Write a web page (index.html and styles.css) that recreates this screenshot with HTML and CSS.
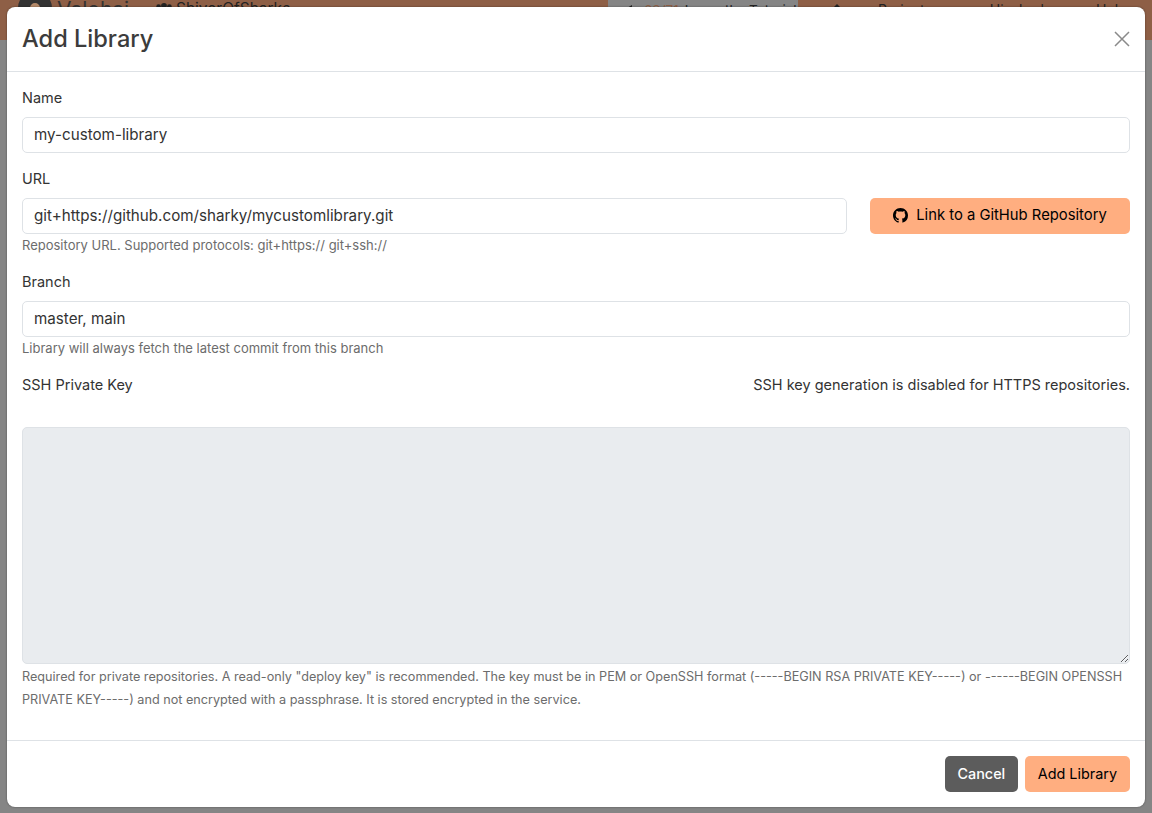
FILE: index.html
```html
<!DOCTYPE html>
<html lang="en">
<head>
<meta charset="utf-8">
<title>Add Library</title>
<link rel="stylesheet" href="styles.css">
</head>
<body>
<header class="topbar">
  <span class="brand-logo"></span>
  <span class="brand-name">Valohai</span>
  <span class="org">
    <svg class="org-icon" viewBox="0 0 20 14" width="18" height="13"><circle cx="4" cy="5" r="2.6"/><circle cx="10" cy="4" r="3.2"/><circle cx="16" cy="5" r="2.6"/><path d="M0 13c0-3 2-5 4-5s4 2 4 5zM5 13c0-4 2-6 5-6s5 2 5 6zM12 13c0-3 2-5 4-5s4 2 4 5z"/></svg>
    ShiverOfSharks
  </span>
  <div class="top-right">
    <div class="announce">
      <svg class="a-icon" viewBox="0 0 10 10" width="10" height="10"><path d="M10 0v10L0 6z"/></svg>
      <span class="a-count">63/71</span>
      <span>Learn the Tutorial</span>
    </div>
    <svg class="nav-icon" viewBox="0 0 10 10" width="10" height="10"><path d="M5 0l5 5v5H0V5z"/></svg>
    <span class="nav-link">Projects</span>
    <span class="nav-link">Hi, sharky</span>
    <span class="nav-link">Help</span>
  </div>
</header>
<div class="modal" role="dialog" aria-label="Add Library">
  <div class="modal-header">
    <h1 class="modal-title">Add Library</h1>
    <button class="close" aria-label="Close">
      <svg viewBox="0 0 16 16" width="16" height="16"><path d="M1 1l14 14M15 1L1 15" fill="none" stroke="#8a8a8a" stroke-width="1.5"/></svg>
    </button>
  </div>
  <div class="modal-body">
    <div class="field">
      <label class="label">Name</label>
      <input class="input" type="text" value="my-custom-library">
    </div>
    <div class="field">
      <label class="label">URL</label>
      <div class="url-row">
        <div class="url-col">
          <input class="input" type="text" value="git+https://github.com/sharky/mycustomlibrary.git">
          <div class="help">Repository URL. Supported protocols: git+https:// git+ssh://</div>
        </div>
        <button class="btn btn-primary btn-github">
          <svg viewBox="0 0 16 16" width="15" height="15"><path fill="#000" d="M8 0C3.58 0 0 3.58 0 8c0 3.54 2.29 6.53 5.47 7.59.4.07.55-.17.55-.38 0-.19-.01-.82-.01-1.49-2.01.37-2.53-.49-2.69-.94-.09-.23-.48-.94-.82-1.13-.28-.15-.68-.52-.01-.53.63-.01 1.08.58 1.23.82.72 1.21 1.87.87 2.33.66.07-.52.28-.87.51-1.07-1.78-.2-3.64-.89-3.64-3.95 0-.87.31-1.59.82-2.15-.08-.2-.36-1.02.08-2.12 0 0 .67-.21 2.2.82.64-.18 1.32-.27 2-.27s1.36.09 2 .27c1.53-1.04 2.2-.82 2.2-.82.44 1.1.16 1.92.08 2.12.51.56.82 1.27.82 2.15 0 3.07-1.87 3.75-3.65 3.95.29.25.54.73.54 1.48 0 1.07-.01 1.93-.01 2.2 0 .21.15.46.55.38A8.01 8.01 0 0 0 16 8c0-4.42-3.58-8-8-8z"/></svg>
          Link to a GitHub Repository
        </button>
      </div>
    </div>
    <div class="field">
      <label class="label">Branch</label>
      <input class="input" type="text" value="master, main">
      <div class="help">Library will always fetch the latest commit from this branch</div>
    </div>
    <div class="key-head">
      <label class="label">SSH Private Key</label>
      <span class="key-note">SSH key generation is disabled for HTTPS repositories.</span>
    </div>
    <textarea class="textarea" disabled></textarea>
    <div class="help help-long">Required for private repositories. A read-only "deploy key" is recommended. The key must be in PEM or OpenSSH format (-----BEGIN RSA PRIVATE KEY-----) or ------BEGIN OPENSSH PRIVATE KEY-----) and not encrypted with a passphrase. It is stored encrypted in the service.</div>
  </div>
  <div class="modal-footer">
    <button class="btn btn-secondary">Cancel</button>
    <button class="btn btn-primary">Add Library</button>
  </div>
</div>
</body>
</html>
```
FILE: styles.css
```css
* { box-sizing: border-box; }
html, body { margin: 0; height: 100%; }
body {
  width: 1152px;
  height: 813px;
  overflow: hidden;
  background: #858585;
  font-family: Inter, "Noto Sans", sans-serif;
  color: #333;
  position: relative;
}
.topbar {
  height: 40px;
  background: #8e5f46;
  display: flex;
  align-items: flex-start;
  padding-left: 18px;
  color: #222;
  overflow: hidden;
}
.brand-logo {
  flex: none;
  width: 34px;
  height: 34px;
  margin-top: -9px;
  border-radius: 50%;
  border: 12px solid #333;
  background: #b58a6a;
}
.brand-name { margin-left: 5px; width: 98px; font-size: 21px; line-height: 20px; color: #333; }
.org { display: flex; gap: 3px; font-size: 15.5px; line-height: 17px; white-space: nowrap; }
.org-icon { fill: #222; margin-top: 2px; }
.top-right { display: flex; align-items: flex-start; margin-left: auto; width: 544px; font-size: 14px; line-height: 20px; white-space: nowrap; }
.announce { flex: none; display: flex; gap: 6px; width: 190px; height: 40px; background: #858585; padding-left: 14px; font-size: 13.5px; }
.a-icon { margin-top: 5px; margin-right: 6px; fill: #222; }
.a-count { color: #8e5f46; }
.nav-icon { flex: none; margin: 4px 36px 0 34px; fill: #222; }
.nav-link { margin-right: 58px; }
.nav-link:nth-of-type(2) { margin-right: 40px; }
.modal {
  position: absolute;
  left: 7px;
  top: 7px;
  width: 1138px;
  height: 800px;
  background: #fff;
  border-radius: 8px;
  box-shadow: 0 0 2px rgba(0, 0, 0, .45);
  display: flex;
  flex-direction: column;
}
.modal-header {
  height: 65px;
  flex: none;
  border-bottom: 1px solid #dee2e6;
  display: flex;
  align-items: center;
  justify-content: space-between;
  padding: 0 15px;
}
.modal-title {
  margin: 0 0 1px;
  font-family: Inter, sans-serif;
  font-weight: 500;
  font-size: 23.6px;
  color: #3c3c3c;
}
.close { border: 0; background: none; padding: 0; display: flex; }
.modal-body { flex: 1; padding: 15px 15px 0; }
.field { margin-bottom: 15px; }
.label { display: block; font-size: 14.5px; line-height: 22px; color: #333; }
.input {
  display: block;
  width: 100%;
  height: 36px;
  margin-top: 8px;
  padding: 0 11px 2px;
  border: 1px solid #dee2e6;
  border-radius: 5px;
  font: 15.2px Inter, sans-serif;
  color: #333;
  background: #fff;
}
.help { font-size: 13px; line-height: 21px; padding-top: 1px; color: #6c6c6c; }
.url-row { display: flex; gap: 23px; align-items: flex-start; margin-top: 8px; }
.url-col { flex: 1; }
.url-col .input { margin-top: 0; }
.btn {
  height: 36px;
  border: 0;
  border-radius: 5px;
  font: 14.4px Inter, sans-serif;
  padding: 0 13px 2px;
}
.btn-primary { background: #ffae80; color: #000; }
.btn-secondary { background: #5c5c5c; color: #fff; font-weight: 500; padding: 0 12.5px 2px; }
.btn-github {
  width: 260px;
  display: flex;
  align-items: center;
  justify-content: center;
  gap: 8px;
  font-size: 14.8px;
}
.key-head { display: flex; justify-content: space-between; height: 53px; }
.key-note { font-size: 14.5px; line-height: 22px; color: #333; }
.textarea {
  display: block;
  width: 100%;
  height: 237px;
  background: #e9ecef;
  border: 1px solid #dee2e6;
  border-radius: 5px;
  margin: 0;
}
.help-long { font-size: 12.65px; line-height: 23px; padding-top: 1px; }
.modal-footer {
  height: 67px;
  flex: none;
  border-top: 1px solid #dee2e6;
  display: flex;
  justify-content: flex-end;
  align-items: center;
  gap: 7px;
  padding: 0 15px;
}
```
